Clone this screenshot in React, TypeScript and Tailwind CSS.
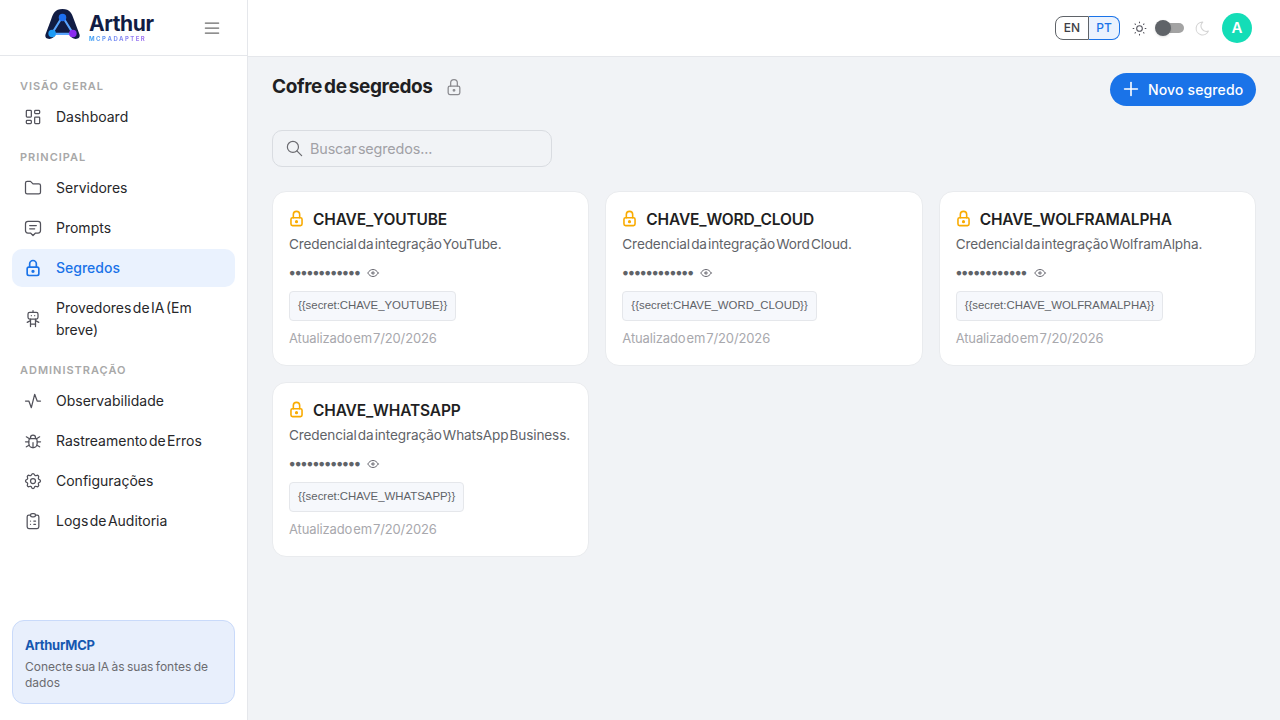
import { ReactNode } from "react";
import {
  TbLayoutDashboard,
  TbFolder,
  TbMessage2,
  TbLock,
  TbRobot,
  TbActivity,
  TbBug,
  TbSettings,
  TbClipboardList,
  TbSun,
  TbMoon,
  TbSearch,
  TbEye,
  TbPlus,
  TbMenu2,
} from "react-icons/tb";

const font = "font-['Inter','Noto_Sans',sans-serif]";

function Logo() {
  return (
    <div className="flex items-center gap-[8px] -mt-[8px]">
      <svg width="37" height="32" viewBox="0 0 38 34" fill="none">
        <path
          d="M19 1C11 1 9 6 7 12L1 28c-1 3 1 5 4 5 3 0 5-2 7-5l3-4h8l3 4c2 3 4 5 7 5 3 0 5-2 4-5l-6-16C29 6 27 1 19 1z"
          fill="#111c44"
        />
        <path d="M19 9L7.5 27.5h23L19 9z" stroke="#5aa5ff" strokeWidth="2.2" fill="#111c44" />
        <circle cx="19" cy="10" r="4" fill="#1e6ff0" />
        <circle cx="8" cy="27" r="4" fill="#1e9cf5" />
        <circle cx="30" cy="27" r="4" fill="#8a2cf0" />
      </svg>
      <div className="flex flex-col items-start mt-[8px]">
        <span className="text-[21px] leading-[22px] font-bold text-[#111c44] tracking-[-0.02em]">Arthur</span>
        <span className="text-[6px] leading-[7px] font-bold tracking-[0.24em] bg-gradient-to-r from-[#2a9df4] to-[#a06cf0] bg-clip-text text-transparent">
          MCP ADAPTER
        </span>
      </div>
    </div>
  );
}

function SectionLabel({ children, className }: { children: ReactNode; className: string }) {
  return (
    <div className={`px-[8px] text-[11px] leading-[14px] font-semibold tracking-[0.09em] [word-spacing:0] text-[#a8a8a8] ${className}`}>
      {children}
    </div>
  );
}

function NavItem({ icon, label, active }: { icon: ReactNode; label: string; active?: boolean }) {
  return (
    <div
      className={`flex items-center rounded-[10px] pl-[11px] pr-[8px] py-[8px] min-h-[38px] mb-[2px] ${
        active ? "bg-[#eaf2fe] text-[#1a73e8] font-medium" : "text-[#27272a]"
      }`}
    >
      <span className={`w-[33px] shrink-0 text-[20px] ${active ? "text-[#1a73e8]" : "text-[#52525b]"}`}>{icon}</span>
      <span className="text-[14px] leading-[22px]">{label}</span>
    </div>
  );
}

function Sidebar() {
  return (
    <aside className="w-[248px] shrink-0 h-[720px] bg-white border-r border-[#e5e7eb] flex flex-col">
      <div className="h-[56px] shrink-0 border-b border-[#e5e7eb] flex items-center pl-[44px] pr-[25px] justify-between">
        <Logo />
        <TbMenu2 strokeWidth={1.5} className="text-[#6b6b6b] text-[20px]" />
      </div>
      <nav className="flex-1 px-[12px] pt-[23px]">
        <SectionLabel className="mb-[5px]">VISÃO GERAL</SectionLabel>
        <NavItem icon={<TbLayoutDashboard strokeWidth={1.5} />} label="Dashboard" />
        <SectionLabel className="mt-[14px] mb-[5px]">PRINCIPAL</SectionLabel>
        <NavItem icon={<TbFolder strokeWidth={1.5} />} label="Servidores" />
        <NavItem icon={<TbMessage2 strokeWidth={1.5} />} label="Prompts" />
        <NavItem icon={<TbLock />} label="Segredos" active />
        <NavItem icon={<TbRobot strokeWidth={1.5} />} label="Provedores de IA (Em breve)" />
        <SectionLabel className="mt-[14px] mb-[5px]">ADMINISTRAÇÃO</SectionLabel>
        <NavItem icon={<TbActivity strokeWidth={1.5} />} label="Observabilidade" />
        <NavItem icon={<TbBug strokeWidth={1.5} />} label="Rastreamento de Erros" />
        <NavItem icon={<TbSettings strokeWidth={1.5} />} label="Configurações" />
        <NavItem icon={<TbClipboardList strokeWidth={1.5} />} label="Logs de Auditoria" />
      </nav>
      <div className="mx-[12px] mb-[16px] h-[84px] rounded-[12px] bg-[#e8effc] border border-[#c9dafa] px-[12px] pt-[15px]">
        <div className="text-[13px] leading-[18px] font-bold text-[#1557b0] tracking-[-0.02em]">Arthur MCP</div>
        <div className="mt-[5px] text-[12px] leading-[16px] text-[#6b6b70] [word-spacing:-1px]">Conecte sua IA às suas fontes de dados</div>
      </div>
    </aside>
  );
}

function Header() {
  return (
    <header className="h-[57px] shrink-0 bg-white border-b border-[#e5e7eb] flex items-center justify-end pr-[28px]">
      <div className="flex h-[24px] text-[12px] font-medium">
        <span className="w-[34px] flex items-center justify-center rounded-l-[8px] border border-[#5f6368] text-[#3f3f46]">EN</span>
        <span className="w-[31px] flex items-center justify-center rounded-r-[8px] border border-l-0 border-[#1a73e8] bg-[#eaf2fe] text-[#1a73e8]">PT</span>
      </div>
      <TbSun strokeWidth={1.5} className="ml-[11px] text-[17px] text-[#52525b]" />
      <div className="ml-[7px] relative w-[29px] h-[16px] flex items-center">
        <div className="ml-[8px] w-[21px] h-[10px] rounded-full bg-[#a3a3a3]" />
        <div className="absolute left-0 top-0 w-[16px] h-[16px] rounded-full bg-[#5f6368] shadow-sm" />
      </div>
      <TbMoon strokeWidth={1.5} className="ml-[10px] text-[17px] text-[#d4d4d4]" />
      <div className="ml-[11px] w-[30px] h-[30px] rounded-full bg-[#14ddb7] flex items-center justify-center text-white text-[15px] font-semibold">A</div>
    </header>
  );
}

function SecretCard({ name, desc }: { name: string; desc: string }) {
  return (
    <div className="bg-white rounded-[14px] border border-[#e9ebee] px-[16px] pt-[16px] pb-[17px]">
      <div className="flex items-center h-[24px]">
        <TbLock strokeWidth={2} className="text-[#f9ab00] text-[19px] -mt-[4px] -ml-[2px] shrink-0" />
        <span className="ml-[7px] text-[15.5px] leading-[24px] font-semibold text-[#1f1f23] tracking-[-0.01em]">{name}</span>
      </div>
      <p className="mt-[3px] text-[13.6px] leading-[19px] text-[#5f6368] tracking-[-0.01em]">{desc}</p>
      <div className="flex items-center mt-[9px] h-[20px]">
        <span className="text-[10.5px] tracking-[-0.04em] text-[#5f6368] font-['Liberation_Sans',sans-serif] w-[72px] overflow-hidden whitespace-nowrap">●●●●●●●●●●●●</span>
        <TbEye strokeWidth={1.5} className="ml-[5px] text-[14px] text-[#52525b]" />
      </div>
      <div className="mt-[8px] flex">
        <code className="h-[30px] flex items-center px-[8px] rounded-[4px] bg-[#f6f8fc] border border-[#e5e7eb] text-[11.4px] text-[#5f6368] font-['Liberation_Sans',sans-serif]">
          {`{{secret:${name}}}`}
        </code>
      </div>
      <div className="mt-[8px] text-[13px] leading-[19px] text-[#a8a8ad] tracking-[-0.01em]">Atualizado em 7/20/2026</div>
    </div>
  );
}

export default function App() {
  return (
    <div className={`flex w-[1280px] h-[720px] overflow-hidden bg-[#f1f3f6] [word-spacing:-2.5px] ${font}`}>
      <Sidebar />
      <div className="flex-1 flex flex-col min-w-0">
        <Header />
        <main className="px-[24px] pt-[16px]">
          <div className="flex items-start justify-between h-[33px]">
            <div className="flex items-center h-[27px]">
              <h1 className="text-[19px] leading-[27px] font-bold text-[#1f1f23] tracking-[-0.02em] [word-spacing:-2px]">Cofre de segredos</h1>
              <TbLock strokeWidth={1.5} className="ml-[11px] text-[20px] text-[#8a8a8f]" />
            </div>
            <button className="h-[33px] w-[146px] rounded-full bg-[#1a73e8] text-white flex items-center pl-[10px] pb-[1px] gap-[6px] text-[14px] font-medium tracking-[0.01em]">
              <TbPlus strokeWidth={1.75} className="text-[22px]" />
              Novo segredo
            </button>
          </div>
          <div className="mt-[24px] w-[280px] h-[37px] rounded-[10px] border border-[#d9dce1] flex items-center pl-[12px]">
            <TbSearch strokeWidth={1.5} className="text-[19px] text-[#6b6b70]" />
            <span className="ml-[6px] pt-[1px] text-[14.4px] text-[#a1a1a6] tracking-[-0.01em]">Buscar segredos...</span>
          </div>
          <div className="mt-[24px] grid grid-cols-3 gap-[16px] items-start">
            <SecretCard name="CHAVE_YOUTUBE" desc="Credencial da integração YouTube." />
            <SecretCard name="CHAVE_WORD_CLOUD" desc="Credencial da integração Word Cloud." />
            <SecretCard name="CHAVE_WOLFRAMALPHA" desc="Credencial da integração WolframAlpha." />
            <SecretCard name="CHAVE_WHATSAPP" desc="Credencial da integração WhatsApp Business." />
          </div>
        </main>
      </div>
    </div>
  );
}
